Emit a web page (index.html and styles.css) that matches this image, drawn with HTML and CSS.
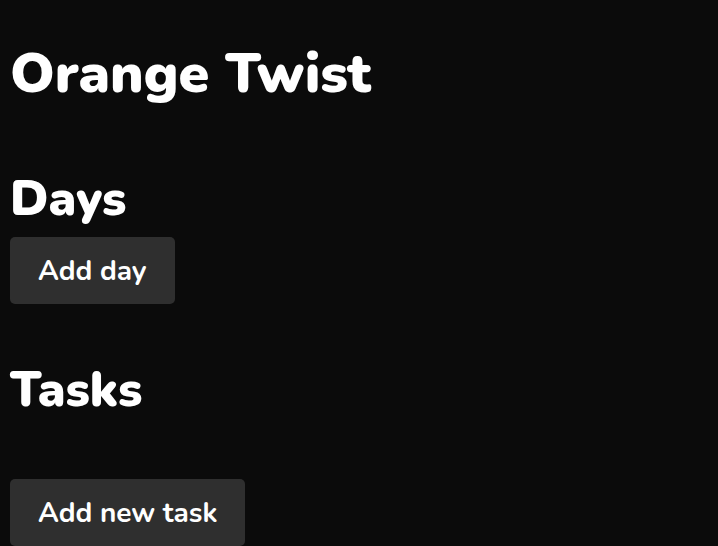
FILE: index.html
```html
<!DOCTYPE html>
<html lang="en">
<head>
<meta charset="utf-8">
<title>Orange Twist</title>
<link rel="stylesheet" href="styles.css">
</head>
<body>
<main class="app">
  <h1 class="title">Orange Twist</h1>
  <section class="section days">
    <h2 class="section-title">Days</h2>
    <button class="btn">Add day</button>
  </section>
  <section class="section tasks">
    <h2 class="section-title">Tasks</h2>
    <div class="task-actions">
      <button class="btn">Add new task</button>
    </div>
  </section>
</main>
</body>
</html>
```
FILE: styles.css
```css
html, body {
  margin: 0;
  padding: 0;
  background: #0b0b0b;
  color: #ffffff;
  font-family: "Nunito", "Lato", "Noto Sans", sans-serif;
}

.app {
  padding: 0 10px;
  display: flex;
  flex-direction: column;
}

.title {
  margin: 0;
  padding-top: 41px;
  font-size: 55.5px;
  font-weight: 900;
  line-height: 66px;
}

.section {
  display: flex;
  flex-direction: column;
  align-items: flex-start;
}

.days {
  margin-top: 62px;
}

.tasks {
  margin-top: 56px;
}

.section-title {
  margin: 0;
  font-size: 49px;
  font-weight: 900;
  line-height: 60px;
}

.days .btn {
  margin-top: 8px;
}

.btn {
  font-family: inherit;
  font-size: 28px;
  font-weight: 700;
  color: #ffffff;
  background: #2f2f2f;
  border: none;
  border-radius: 5px;
  height: 67px;
  padding: 0 28px;
  cursor: pointer;
}

.task-actions {
  margin-top: 59px;
}
```
